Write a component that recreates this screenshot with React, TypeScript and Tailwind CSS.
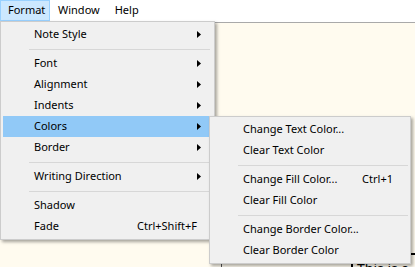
import React from 'react';

type Entry =
  | { kind: 'item'; label: string; shortcut?: string; sub?: boolean; active?: boolean }
  | { kind: 'sep' };

const formatMenu: Entry[] = [
  { kind: 'item', label: 'Note Style', sub: true },
  { kind: 'sep' },
  { kind: 'item', label: 'Font', sub: true },
  { kind: 'item', label: 'Alignment', sub: true },
  { kind: 'item', label: 'Indents', sub: true },
  { kind: 'item', label: 'Colors', sub: true, active: true },
  { kind: 'item', label: 'Border', sub: true },
  { kind: 'sep' },
  { kind: 'item', label: 'Writing Direction', sub: true },
  { kind: 'sep' },
  { kind: 'item', label: 'Shadow' },
  { kind: 'item', label: 'Fade', shortcut: 'Ctrl+Shift+F' },
];

const colorsMenu: Entry[] = [
  { kind: 'item', label: 'Change Text Color...' },
  { kind: 'item', label: 'Clear Text Color' },
  { kind: 'sep' },
  { kind: 'item', label: 'Change Fill Color...', shortcut: 'Ctrl+1' },
  { kind: 'item', label: 'Clear Fill Color' },
  { kind: 'sep' },
  { kind: 'item', label: 'Change Border Color...' },
  { kind: 'item', label: 'Clear Border Color' },
];

function Arrow() {
  return (
    <svg width="4" height="7" viewBox="0 0 4 7" className="shrink-0">
      <path d="M0 0L4 3.5L0 7Z" fill="#000" />
    </svg>
  );
}

function Menu({ entries, sepRight }: { entries: Entry[]; sepRight: string }) {
  return (
    <div className="flex flex-col bg-[#f0f0f0] border border-[#cccccc] py-[2px] shadow-[2px_2px_3px_rgba(0,0,0,0.35)]">
      {entries.map((e, i) =>
        e.kind === 'sep' ? (
          <div key={i} className="h-[8px] flex items-center">
            <div className={`h-px flex-1 bg-[#d7d7d7] ml-[28px] ${sepRight}`} />
          </div>
        ) : (
          <div
            key={i}
            className={`h-[21px] mx-[2px] pl-[31px] pr-[11px] flex items-center ${
              e.active ? 'bg-[#91c9f7]' : ''
            }`}
          >
            <span className="flex-1">{e.label}</span>
            {e.shortcut && <span className="mr-[4px]">{e.shortcut}</span>}
            {e.sub && <Arrow />}
          </div>
        )
      )}
    </div>
  );
}

export default function App() {
  return (
    <div
      className="relative w-[415px] h-[267px] overflow-hidden bg-white text-[11px] text-black"
      style={{ fontFamily: '"Noto Sans", "Segoe UI", sans-serif' }}
    >
      {/* Menu bar */}
      <div className="h-[22px] flex items-start bg-white">
        <div className="h-[21px] w-[50px] flex items-center pl-[7px] bg-[#cce8ff] border border-[#99d1ff]">
          Format
        </div>
        <div className="h-[21px] flex items-center pl-[8px]">Window</div>
        <div className="h-[21px] flex items-center pl-[15px]">Help</div>
      </div>

      {/* Document canvas */}
      <div className="relative h-[245px] bg-[#fffbef] border-t border-[#a9a9a9]">
        <div className="absolute left-[221px] top-[220px] w-px h-[40px] bg-[#555555]" />
        <div className="absolute left-[351px] top-[230px] w-[80px] h-[40px] border-t-2 border-l-2 border-black pl-[4px] pt-[7px] text-[14px] leading-none">
          This is a
        </div>
      </div>

      {/* Format dropdown */}
      <div className="absolute left-0 top-[21px] w-[215px]">
        <Menu entries={formatMenu} sepRight="mr-[4px]" />
      </div>

      {/* Colors submenu */}
      <div className="absolute left-[209px] top-[116px] w-[202px]">
        <Menu entries={colorsMenu} sepRight="mr-[2px]" />
      </div>
    </div>
  );
}
